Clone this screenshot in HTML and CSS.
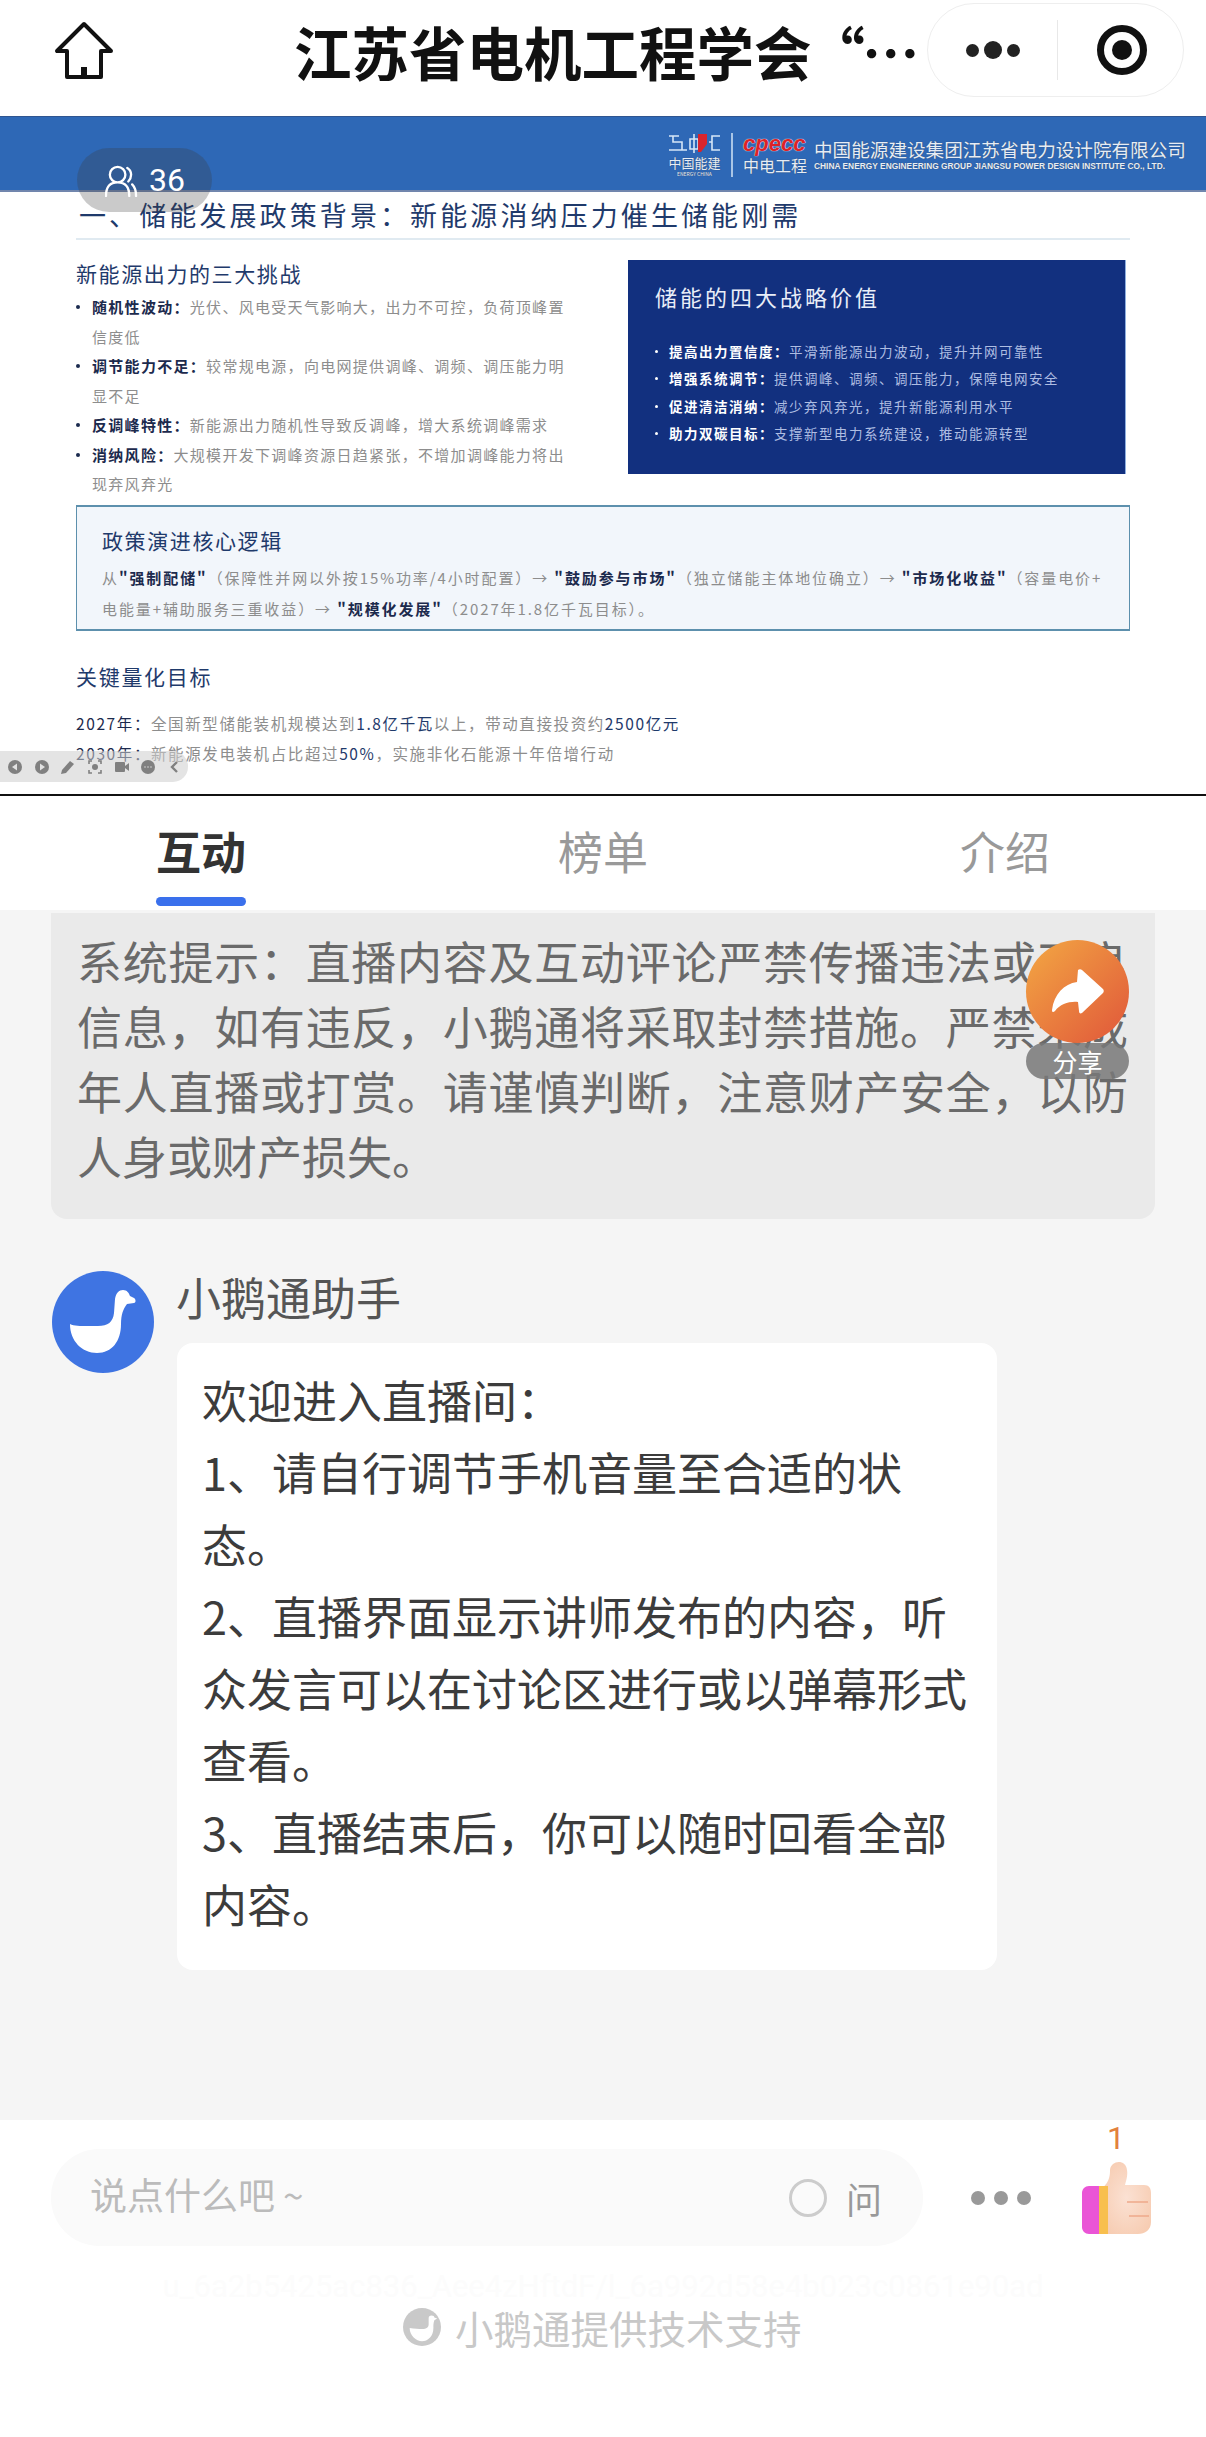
FILE: index.html
```html
<!DOCTYPE html>
<html lang="zh-CN">
<head>
<meta charset="utf-8">
<title>江苏省电机工程学会</title>
<link rel="stylesheet" href="styles.css">
</head>
<body>
<div class="page">
  <header class="nav">
    <svg class="home" viewBox="0 0 60 58"><path d="M30 3 L3 30 H13 V56 H47 V30 H57 Z" fill="none" stroke="#111" stroke-width="4" stroke-linejoin="round"/><rect x="27" y="46" width="6" height="10" fill="#111"/></svg>
    <h1 class="nav-title">江苏省电机工程学会<span class="nav-more">“…</span></h1>
    <div class="capsule">
      <div class="cap-dots"><i></i><b></b><i></i></div>
      <span class="cap-line"></span>
      <div class="cap-target"><b></b></div>
    </div>
  </header>

  <section class="slide">
    <div class="banner">
      <div class="logo-a"><svg viewBox="0 0 53 21" class="logo-mark"><path d="M1 3H11M5 3V9H14V17M1 17H19M22 6H30V16H22ZM26 1V20" fill="none" stroke="#d6e6f7" stroke-width="1.6"/><path d="M30 1H39V11L33 19H30Z" fill="#d8242c"/><path d="M41 9H44V3H52M44 9V17H52" fill="none" stroke="#d6e6f7" stroke-width="1.6"/></svg><span>中国能建</span><em>ENERGY CHINA</em></div>
      <div class="logo-b"><strong>cpecc</strong><span>中电工程</span></div>
      <div class="logo-c"><span>中国能源建设集团江苏省电力设计院有限公司</span><em>CHINA ENERGY ENGINEERING GROUP JIANGSU POWER DESIGN INSTITUTE CO., LTD.</em></div>
    </div>
    <div class="slide-body">
      <h2 class="s-title">一、储能发展政策背景：新能源消纳压力催生储能刚需</h2>
      <div class="columns">
        <div class="col-left">
          <h3 class="s-head">新能源出力的三大挑战</h3>
          <ul class="s-list">
            <li><b>随机性波动：</b>光伏、风电受天气影响大，出力不可控，负荷顶峰置信度低</li>
            <li><b>调节能力不足：</b>较常规电源，向电网提供调峰、调频、调压能力明显不足</li>
            <li><b>反调峰特性：</b>新能源出力随机性导致反调峰，增大系统调峰需求</li>
            <li><b>消纳风险：</b>大规模开发下调峰资源日趋紧张，不增加调峰能力将出现弃风弃光</li>
          </ul>
        </div>
        <div class="col-right">
          <h3 class="v-head">储能的四大战略价值</h3>
          <ul class="v-list">
            <li><b>提高出力置信度：</b>平滑新能源出力波动，提升并网可靠性</li>
            <li><b>增强系统调节：</b>提供调峰、调频、调压能力，保障电网安全</li>
            <li><b>促进清洁消纳：</b>减少弃风弃光，提升新能源利用水平</li>
            <li><b>助力双碳目标：</b>支撑新型电力系统建设，推动能源转型</li>
          </ul>
        </div>
      </div>
      <div class="logic">
        <h3 class="logic-head">政策演进核心逻辑</h3>
        <p class="logic-text">从<b>"强制配储"</b>（保障性并网以外按15%功率/4小时配置）→ <b>"鼓励参与市场"</b>（独立储能主体地位确立）→ <b>"市场化收益"</b>（容量电价+<br>电能量+辅助服务三重收益）→ <b>"规模化发展"</b>（2027年1.8亿千瓦目标）。</p>
      </div>
      <h3 class="goal-head">关键量化目标</h3>
      <p class="goal"><b class="k">2027年：</b>全国新型储能装机规模达到<b>1.8亿千瓦</b>以上，带动直接投资约<b>2500亿元</b></p>
      <p class="goal"><b class="k">2030年：</b>新能源发电装机占比超过<b>50%</b>，实施非化石能源十年倍增行动</p>
    </div>
    <div class="viewers">
      <svg viewBox="0 0 34 34" class="viewers-icon"><path d="M13 3a8 8 0 1 1 0 16a8 8 0 1 1 0-16M1 33c0-9 4-14 12-14s12 5 12 14M23 4c5 3 5 10 1 14M28 21c3 3 4 7 4 12" fill="none" stroke="#fff" stroke-width="2.4" stroke-linecap="round"/></svg>
      <span>36</span>
    </div>
    <div class="tools">
      <svg viewBox="0 0 16 16"><circle cx="8" cy="8" r="7" fill="#808080"/><path d="M10 4.5v7L5 8z" fill="#e2e2e2"/></svg>
      <svg viewBox="0 0 16 16"><circle cx="8" cy="8" r="7" fill="#808080"/><path d="M6 4.5v7L11 8z" fill="#e2e2e2"/></svg>
      <svg viewBox="0 0 16 16"><path d="M1 15l1-4 8-9 4 3-8 9z" fill="#808080"/></svg>
      <svg viewBox="0 0 16 16"><circle cx="8" cy="8" r="3" fill="#808080"/><path d="M2 5V2h3M11 2h3v3M14 11v3h-3M5 14H2v-3" fill="none" stroke="#808080" stroke-width="1.6"/></svg>
      <svg viewBox="0 0 16 16"><rect x="1" y="3" width="10" height="10" rx="1" fill="#808080"/><path d="M11 7l4-3v8l-4-3z" fill="#808080"/></svg>
      <svg viewBox="0 0 16 16"><circle cx="8" cy="8" r="7" fill="#808080"/><path d="M4.5 8h1M7.5 8h1M10.5 8h1" stroke="#e2e2e2" stroke-width="1.4"/></svg>
      <svg viewBox="0 0 16 16"><path d="M10 3L5 8l5 5" fill="none" stroke="#808080" stroke-width="2.4"/></svg>
    </div>
  </section>

  <nav class="tabs">
    <div class="tab active">互动<i></i></div>
    <div class="tab">榜单</div>
    <div class="tab">介绍</div>
  </nav>

  <main class="chat">
    <div class="notice">系统提示：直播内容及互动评论严禁传播违法或不良信息，如有违反，小鹅通将采取封禁措施。严禁未成年人直播或打赏。请谨慎判断，注意财产安全，以防人身或财产损失。</div>
    <div class="msg">
      <svg class="avatar" viewBox="0 0 102 102"><circle cx="51" cy="51" r="51" fill="#3f74e2"/><path d="M18 53C22 55 28 55 36 55H46C56 55 61 51 62 42L63 28C64 22 67 19 71 19C75 19 77 22 78 25L82 27C84 28 84 32 82 32L75 33C71 38 69 44 69 53C69 70 60 82 45 82C30 82 18 70 18 53Z" fill="#fff"/></svg>
      <div class="msg-body">
        <div class="msg-name">小鹅通助手</div>
        <div class="bubble">欢迎进入直播间：<br>1、请自行调节手机音量至合适的状态。<br>2、直播界面显示讲师发布的内容，听众发言可以在讨论区进行或以弹幕形式查看。<br>3、直播结束后，你可以随时回看全部内容。</div>
      </div>
    </div>
    <div class="share">
      <div class="share-btn"><svg viewBox="0 0 52 45"><path d="M26 1C27 0 29 0 30 1L51 20C52 21 52 23 51 24L30 44C28 45 27 44 27 42L26 33C18 32 8 35 3 42C1 44 0 43 0 41C2 25 12 15 25 13Z" fill="#fff"/></svg></div>
      <div class="share-label">分享</div>
    </div>
  </main>

  <footer class="bottom">
    <div class="like-count">1</div>
    <div class="input-row">
      <div class="input">
        <span class="placeholder">说点什么吧<span class="tilde">~</span></span>
        <span class="ask"><i></i>问</span>
      </div>
      <div class="more"><i></i><i></i><i></i></div>
      <svg class="thumb" viewBox="0 0 70 73"><defs><radialGradient id="tg" cx=".5" cy=".5" r=".7"><stop offset="0" stop-color="#fbe1d3"/><stop offset="1" stop-color="#f6c9ad"/></radialGradient></defs><path d="M20 26C28 20 28 12 28 8C29-2 44-3 45 8C46 14 44 19 43 23H62C67 23 69 26 69 31V60C69 68 63 72 56 72H20Z" fill="url(#tg)"/><path d="M7 24H17V72H7C3 72 0 69 0 65V31C0 27 3 24 7 24Z" fill="#ea55d6"/><rect x="17" y="24" width="9" height="48" fill="#f8bf4e"/><path d="M45 40H66M47 54H67" stroke="#eea98b" stroke-width="1.6"/></svg>
    </div>
    <div class="uid">u_6a2b5425ac836_Aee4zHftdF/l_6a992d58e4b023c0861e90ad</div>
    <div class="powered">
      <svg viewBox="0 0 40 40"><circle cx="20" cy="20" r="20" fill="#c9c9c9"/><path d="M7 21C12 22 17 22 20 22C25 22 27 20 27 17V11C27 9 28 8 30 8S33 9 33 10L36 11L33 13C32 16 32 18 32 21C32 30 26 35 20 35S7 29 7 21Z" fill="#fff"/></svg>
      <span>小鹅通提供技术支持</span>
    </div>
  </footer>
</div>
</body>
</html>
```

FILE: styles.css
```css
* { box-sizing: border-box; }
html, body { margin: 0; padding: 0; }
body { font-family: "Noto Sans CJK SC", "Noto Sans", sans-serif; background: #fff; }
h1, h2, h3, p, ul { margin: 0; padding: 0; font-weight: 400; }
ul { list-style: none; }
.page { width: 1206px; height: 2437px; overflow: hidden; display: flex; flex-direction: column; background: #fff; }

/* nav */
.nav { height: 116px; flex: none; display: flex; align-items: flex-start; position: relative; padding-left: 54px; }
.home { width: 60px; height: 58px; margin-top: 21px; flex: none; }
.nav-title { margin: 16px 0 0 180px; font-size: 57.5px; line-height: 70px; font-weight: 700; color: #111; white-space: nowrap; }
.nav-more { margin-left: -4px; letter-spacing: -3px; }
.capsule { position: absolute; left: 927px; top: 3px; width: 257px; height: 94px; border: 1px solid #eee; border-radius: 47px; background: #fff; display: flex; align-items: center; }
.cap-dots { width: 129px; display: flex; justify-content: center; align-items: center; gap: 5px; }
.cap-dots i { width: 13px; height: 13px; border-radius: 50%; background: #222; }
.cap-dots b { width: 18px; height: 18px; border-radius: 50%; background: #222; }
.cap-line { width: 1px; height: 60px; background: #e8e8e8; }
.cap-target { width: 50px; height: 50px; margin-left: 39px; border: 7px solid #111; border-radius: 50%; display: flex; align-items: center; justify-content: center; }
.cap-target b { width: 20px; height: 20px; border-radius: 50%; background: #111; }

/* slide */
.slide { height: 678px; flex: none; position: relative; background: #fff; }
.banner { height: 76px; background: #2e68b6; border-top: 1px solid #2f5590; border-bottom: 2px solid #7186ad; display: flex; align-items: flex-start; padding: 16px 0 0 668px; color: #e6edf6; }
.logo-a { width: 53px; display: flex; flex-direction: column; align-items: center; text-shadow: 0 0 1px #39465c; }
.logo-mark { width: 53px; height: 21px; flex: none; }
.logo-a span { font-size: 13px; line-height: 17px; white-space: nowrap; }
.logo-a em { font-size: 5px; line-height: 6px; font-style: normal; white-space: nowrap; }
.logo-b { width: 83px; margin-left: 10px; padding-left: 10px; border-left: 2px solid #a9c5e6; height: 44px; display: flex; flex-direction: column; align-items: flex-start; text-shadow: 0 0 1px #39465c; }
.logo-b strong { font: italic 700 22px/22px "Liberation Sans", sans-serif; color: #dc2228; text-shadow: 0 0 1px #fff, 0 0 1px #fff; }
.logo-b span { font-size: 16px; line-height: 21px; white-space: nowrap; }
.logo-c { display: flex; flex-direction: column; text-shadow: 0 0 1px #39465c; }
.logo-c span { font-size: 18.6px; line-height: 25px; white-space: nowrap; margin-top: 3px; }
.logo-c em { font: normal 700 8.4px/11px "Liberation Sans", sans-serif; white-space: nowrap; }

.slide-body { padding: 0 76px; }
.s-title { font-size: 27px; line-height: 40px; letter-spacing: 3.1px; color: #1f3a6b; padding: 3px 0 2px 3px; border-bottom: 2px solid #e0eaf1; margin-bottom: 20px; height: 48px; }
.columns { display: grid; grid-template-columns: 552px 498px; grid-template-rows: 214px; height: 214px; margin-bottom: 31px; }
.s-head { font-size: 21px; line-height: 28px; letter-spacing: 1.6px; color: #1f3a6b; margin: -1px 0 5px; }
.s-list { width: 490px; }
.s-list li { position: relative; padding-left: 16px; font-size: 15px; line-height: 29.5px; letter-spacing: 1.3px; color: #8d8d8d; }
.s-list li::before { content: ""; position: absolute; left: 0; top: 13px; width: 4px; height: 4px; border-radius: 50%; background: #1b2b4f; }
.s-list b { font-weight: 700; color: #1c2a4d; }

.col-right { background: #12307f; border-right: 1px solid #8fb0e0; padding: 20px 0 0 27px; color: #fff; }
.v-head { font-size: 22px; line-height: 32px; letter-spacing: 3px; color: #e9eef8; margin-bottom: 26px; }
.v-list li { position: relative; padding-left: 14px; font-size: 13.5px; line-height: 27.3px; letter-spacing: 1.5px; color: #aebde2; white-space: nowrap; }
.v-list li::before { content: ""; position: absolute; left: 0; top: 12px; width: 3px; height: 3px; border-radius: 50%; background: #fff; }
.v-list b { font-weight: 700; color: #fff; }

.logic { height: 126px; background: #f2f6fb; border: 1px solid #5d90ad; border-width: 2px 1px; padding: 18px 25px 0; }
.logic-head { font-size: 21px; line-height: 30px; letter-spacing: 1.6px; color: #1f3a6b; margin-bottom: 7px; }
.logic-text { font-size: 15px; line-height: 31px; color: #8d8d8d; letter-spacing: 1.9px; white-space: nowrap; }
.logic-text b { font-weight: 700; color: #1c2a4d; }

.goal-head { font-size: 21px; line-height: 30px; letter-spacing: 1.7px; color: #1f3a6b; margin: 30px 0 17px; }
.goal { font-size: 15.5px; line-height: 30px; color: #8d8d8d; letter-spacing: 1.6px; white-space: nowrap; }
.goal b { font-weight: 400; color: #1f3a6b; }
.goal b.k { color: #1c2a4d; }

.viewers { position: absolute; left: 77px; top: 32px; width: 135px; height: 64px; border-radius: 32px; background: rgba(60, 60, 60, .27); color: #fff; display: flex; align-items: center; padding-left: 28px; gap: 11px; }
.viewers-icon { width: 33px; height: 33px; }
.viewers span { font: 400 32px/40px "Roboto", sans-serif; }

.tools { position: absolute; left: 0; top: 635px; width: 188px; height: 31px; border-radius: 0 15px 15px 0; background: rgba(205, 205, 205, .55); display: flex; align-items: center; padding-left: 7px; gap: 10.7px; }
.tools svg { width: 16px; height: 16px; flex: none; }

/* tabs */
.tabs { height: 116px; flex: none; display: grid; grid-template-columns: repeat(3, 402px); border-top: 2px solid #111; background: #fff; }
.tab { position: relative; text-align: center; font-size: 45px; line-height: 66px; padding-top: 22px; color: #999; }
.tab.active { color: #333; font-weight: 700; }
.tab i { position: absolute; left: 156px; top: 101px; width: 90px; height: 9px; border-radius: 5px; background: #3a70ec; }

/* chat */
.chat { flex: 1; min-height: 0; position: relative; background: #f5f5f5; padding: 3px 51px 0; }
.notice { background: #eaeaea; border-radius: 0 0 16px 16px; padding: 15px 27px 31px 26px; font-size: 45px; line-height: 65px; color: #6a6a6a; text-align: justify; }
.msg { display: flex; margin-top: 52px; gap: 23px; margin-left: 1px; }
.avatar { width: 102px; height: 102px; flex: none; }
.msg-body { width: 820px; }
.msg-name { font-size: 45px; line-height: 56px; color: #555; margin: -2px 0 18px -1px; }
.bubble { background: #fff; border-radius: 16px; padding: 21px 24px 30px 25px; font-size: 45px; line-height: 72px; color: #3c3c3c; }

.share { position: absolute; left: 1026px; top: 30px; width: 103px; }
.share-btn { width: 103px; height: 103px; border-radius: 50%; background: linear-gradient(135deg, #f3a843, #e0563a); display: flex; align-items: center; justify-content: center; }
.share-btn svg { width: 52px; height: 45px; }
.share-label { height: 36px; border-radius: 18px; background: rgba(120, 120, 120, .85); color: #fff; font-size: 25px; line-height: 36px; text-align: center; }

/* bottom */
.bottom { height: 317px; flex: none; position: relative; background: #fff; padding: 29px 0 0 51px; }
.like-count { position: absolute; left: 1100px; top: 2px; width: 32px; text-align: center; font: 400 32px/32px "Roboto", sans-serif; color: #e2813c; }
.input-row { display: flex; align-items: center; height: 97px; }
.input { width: 872px; height: 97px; border-radius: 48px; background: #fafafa; display: flex; align-items: center; justify-content: space-between; padding: 0 41px 0 39px; }
.placeholder { font-size: 37px; color: #bbb; margin-bottom: 7px; }
.tilde { margin-left: 8px; }
.ask { display: flex; align-items: center; gap: 19px; font-size: 36px; color: #999; }
.ask i { width: 38px; height: 38px; border-radius: 50%; border: 3px solid #ccc; }
.more { display: flex; gap: 9px; margin-left: 48px; }
.more i { width: 14px; height: 14px; border-radius: 50%; background: #999; }
.thumb { width: 70px; height: 73px; margin: 1px 0 0 51px; flex: none; }
.uid { margin-top: 21px; text-align: center; font: 400 31px/40px "Roboto", sans-serif; color: #fcfcfc; padding-right: 51px; white-space: nowrap; }
.powered { display: flex; align-items: center; gap: 14px; margin: -5px 0 0 352px; font-size: 38.5px; line-height: 50px; color: #c8c8c8; }
.powered svg { width: 38px; height: 38px; flex: none; }
```
